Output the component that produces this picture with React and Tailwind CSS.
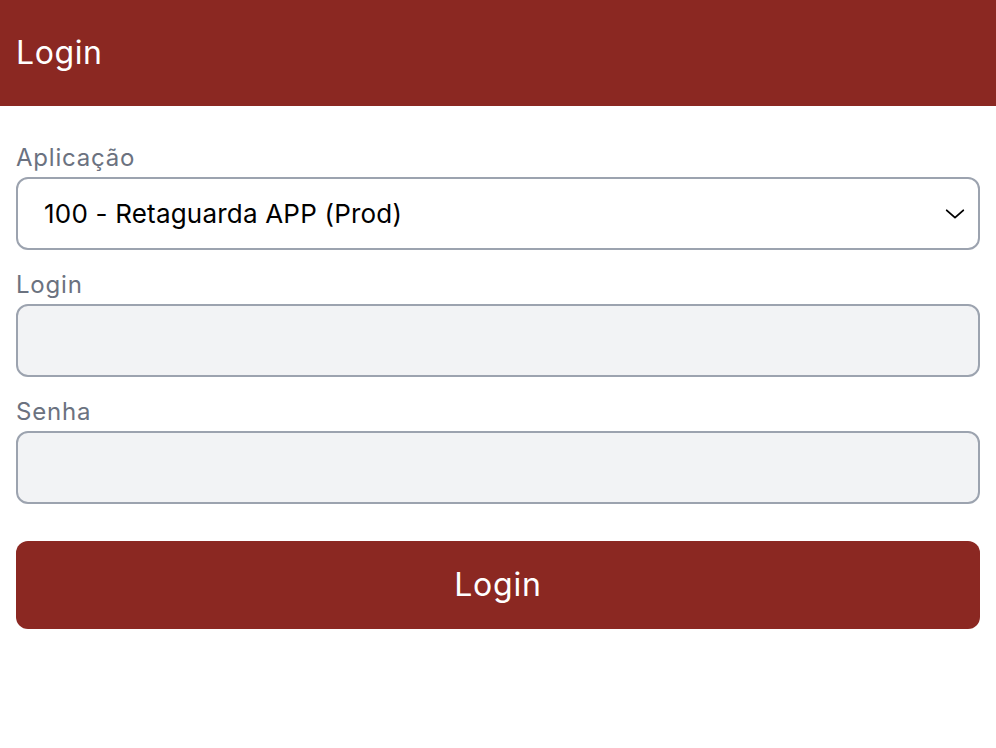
import { useState } from "react";

const Field = ({ label, children }) => {
  return (
    <div className="flex flex-col">
      <label className="text-[24px] leading-8 tracking-[0.8px] text-[#6b7280] mb-[3px]">
        {label}
      </label>
      {children}
    </div>
  );
};

const App = () => {
  const [app, setApp] = useState("100");
  const [login, setLogin] = useState("");
  const [senha, setSenha] = useState("");

  return (
    <div
      className="min-h-screen bg-white"
      style={{ fontFamily: "Inter, 'Noto Sans', sans-serif" }}
    >
      <header className="h-[106px] bg-[#8b2822] px-4 flex items-center">
        <h1 className="text-[32px] leading-none tracking-[0.6px] text-white">Login</h1>
      </header>

      <form
        className="px-4 pt-[36px] flex flex-col gap-[19px]"
        onSubmit={(e) => e.preventDefault()}
      >
        <Field label="Aplicação">
          <div className="relative">
            <select
              value={app}
              onChange={(e) => setApp(e.target.value)}
              className="appearance-none w-full h-[73px] rounded-xl border-2 border-[#9ca3af] bg-white pl-[26px] pr-12 text-[26px] tracking-[0.2px] text-black outline-none"
            >
              <option value="100">100 - Retaguarda APP (Prod)</option>
            </select>
            <svg
              className="absolute right-[14px] top-1/2 -translate-y-1/2 pointer-events-none"
              width="22"
              height="22"
              viewBox="0 0 24 24"
              fill="none"
              stroke="black"
              strokeWidth="2"
              strokeLinecap="round"
              strokeLinejoin="round"
            >
              <path d="M3 8l9 8 9-8" />
            </svg>
          </div>
        </Field>

        <Field label="Login">
          <input
            type="text"
            value={login}
            onChange={(e) => setLogin(e.target.value)}
            className="w-full h-[73px] rounded-xl border-2 border-[#9ca3af] bg-[#f2f3f5] px-[26px] text-[26px] outline-none"
          />
        </Field>

        <Field label="Senha">
          <input
            type="password"
            value={senha}
            onChange={(e) => setSenha(e.target.value)}
            className="w-full h-[73px] rounded-xl border-2 border-[#9ca3af] bg-[#f2f3f5] px-[26px] text-[26px] outline-none"
          />
        </Field>

        <button
          type="submit"
          className="mt-[18px] h-[88px] rounded-xl bg-[#8b2822] text-white text-[32px] tracking-[0.8px]"
        >
          Login
        </button>
      </form>
    </div>
  );
};

export default App;
